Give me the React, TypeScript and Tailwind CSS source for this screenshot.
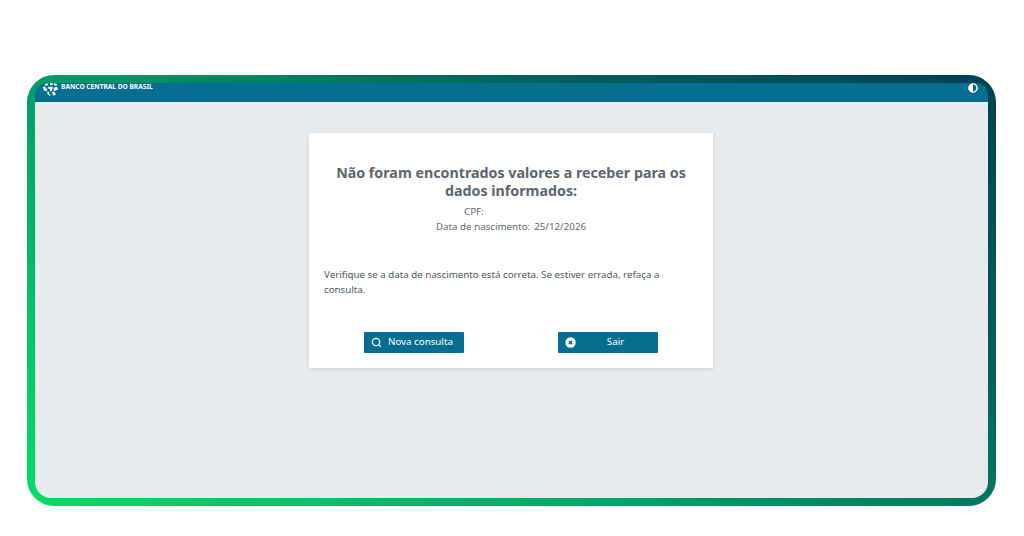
import { Search } from "lucide-react";

function Logo() {
  return (
    <svg width="17" height="15" viewBox="0 0 19 16" fill="#fff" className="-mt-[1px] shrink-0">
      <path d="M3 2l3-1 1 2-3 1zM9 1h3v2H9zM14 1l3 1-1 2-3-1z" />
      <path d="M1 5h3v2h2l-1 3-3-1zM7 5h5v2l-1 1v2H9V8L7 7zM13 6l4-1 1 3-3 1-1 1-1-2z" />
      <path d="M6 10l2 1v2l2 1-1 1-3-2zM11 11l3-1v2l2 1-3 2-1-2z" />
    </svg>
  );
}

function ContrastIcon() {
  return (
    <svg width="10" height="10" viewBox="0 0 10 10" className="shrink-0">
      <circle cx="5" cy="5" r="4.4" fill="#fff" stroke="#fff" strokeWidth="1" />
      <path d="M5 1.6a3.4 3.4 0 0 1 0 6.8z" fill="#066f91" />
    </svg>
  );
}

function CloseIcon() {
  return (
    <svg width="11" height="11" viewBox="0 0 11 11" className="shrink-0">
      <circle cx="5.5" cy="5.5" r="5.2" fill="#fff" />
      <path d="M3.9 3.9l3.2 3.2M7.1 3.9l-3.2 3.2" stroke="#066f91" strokeWidth="1.5" />
    </svg>
  );
}

export default function App() {
  return (
    <div className="h-[536px] w-[1024px] bg-white pt-[75px] pb-[30px] pl-[27px] pr-[28px] font-['Noto_Sans',sans-serif]">
      <div className="h-full rounded-[27px] bg-[linear-gradient(33deg,#00de66_0%,#00a868_35%,#00605c_72%,#003f55_100%)] p-[8px]">
        <div className="flex h-full flex-col rounded-[16px] bg-[#e8ebee]">
          <header className="flex h-[19px] items-start justify-between rounded-t-[12px] bg-[#066f91] pl-[7px] pr-[10px]">
            <div className="flex items-start gap-[2px]">
              <Logo />
              <span className="mt-[-1px] text-[6.6px] leading-[10px] font-bold whitespace-nowrap text-white">BANCO CENTRAL DO BRASIL</span>
            </div>
            <ContrastIcon />
          </header>
          <main className="flex flex-1 justify-center pt-[31px] pr-[1px]">
            <section className="h-[235px] w-[404px] bg-white px-[15px] pt-[31px] shadow-[0_1px_4px_rgba(0,0,0,0.12)]">
              <h1 className="mx-auto w-[360px] text-center text-[14.25px] leading-[18px] font-bold text-[#5c6470]">
                Não foram encontrados valores a receber para os dados informados:
              </h1>
              <div className="mt-[5px] text-[9.75px] leading-[14.5px] text-[#5f6670]">
                <div className="pl-[140px]">CPF:</div>
                <div className="flex gap-[4px] pl-[112px]">
                  <span>Data de nascimento:</span>
                  <span>25/12/2026</span>
                </div>
              </div>
              <p className="mt-[33px] text-[9.75px] leading-[15px] text-[#4f5662]">
                Verifique se a data de nascimento está correta. Se estiver errada, refaça a consulta.
              </p>
              <div className="mt-[35px] flex gap-[94px] pl-[40px]">
                <button className="flex h-[21px] w-[100px] items-center rounded-[1px] bg-[#066f91] pl-[7px] text-[9.75px] text-white">
                  <Search size={11} strokeWidth={2.5} color="#fff" className="-mt-[1px]" />
                  <span className="ml-[6px]">Nova consulta</span>
                </button>
                <button className="flex h-[21px] w-[100px] items-center rounded-[1px] bg-[#066f91] pl-[7px] text-[9.75px] text-white">
                  <CloseIcon />
                  <span className="flex-1 pr-[3px] text-center">Sair</span>
                </button>
              </div>
            </section>
          </main>
        </div>
      </div>
    </div>
  );
}
